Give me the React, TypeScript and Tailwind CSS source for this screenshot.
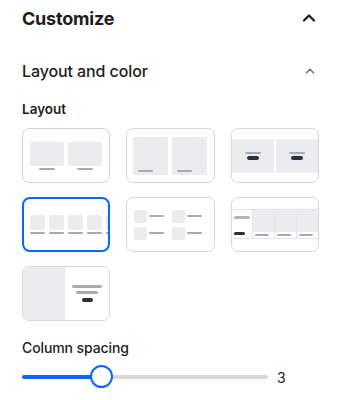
import { ChevronUp } from 'lucide-react';

const gray = 'bg-[#ececee]';

function CardShell({ children, selected, tint }: { children: React.ReactNode; selected?: boolean; tint?: boolean }) {
  return (
    <div
      className={`h-[55px] overflow-hidden bg-white ${
        selected
          ? 'border-2 border-[#0a66ff] rounded-[8px]'
          : tint
          ? 'border border-[#c9d4ea] rounded-[7px]'
          : 'border border-[#d6d8dc] rounded-[7px]'
      }`}
    >
      {children}
    </div>
  );
}

export default function App() {
  return (
    <div className="w-[341px] h-[400px] bg-white text-[#1c1c1e] overflow-hidden" style={{ fontFamily: 'Inter, "Liberation Sans", sans-serif' }}>
      {/* header */}
      <div className="h-[36px] flex items-center justify-between pl-[22px] pr-[22px]">
        <h1 className="text-[18px] font-bold tracking-[-0.2px]">Customize</h1>
        <ChevronUp className="w-[20px] h-[20px] text-[#1c1c1e]" strokeWidth={2.75} />
      </div>

      <div className="px-[22px]">
        <div className="mt-[21px] h-[28px] flex items-center justify-between">
          <h2 className="text-[16px] font-medium tracking-[-0.1px]">Layout and color</h2>
          <ChevronUp className="w-[14px] h-[14px] text-[#6b6f76] mr-[2px]" strokeWidth={2.5} />
        </div>

        <div className="mt-[14px] h-[20px] flex items-center text-[13.5px] font-semibold">Layout</div>

        <div className="mt-[9px] grid grid-cols-3 gap-x-[16px] gap-y-[14px]">
          {/* 1: two boxes with captions below */}
          <CardShell tint>
            <div className="h-full flex items-center justify-center gap-[4px]">
              {[0, 1].map((i) => (
                <div key={i} className="flex flex-col items-center">
                  <div className={`w-[34px] h-[24px] rounded-[2px] ${gray}`} />
                  <div className="w-[16px] h-[2px] mt-[2px] rounded-full bg-[#a8abb0]" />
                </div>
              ))}
            </div>
          </CardShell>

          {/* 2: two tall boxes with caption inside */}
          <CardShell>
            <div className="h-full flex items-center justify-center gap-[4px]">
              {[0, 1].map((i) => (
                <div key={i} className={`w-[35px] h-[38px] rounded-[2px] ${gray} flex items-end pl-[5px] pb-[3px]`}>
                  <div className="w-[15px] h-[2px] rounded-full bg-[#a8abb0]" />
                </div>
              ))}
            </div>
          </CardShell>

          {/* 3: banner band split in two */}
          <CardShell>
            <div className="h-full flex flex-col">
              <div className="h-[10px]" />
              <div className="h-[34px] flex gap-[2px]">
                {[0, 1].map((i) => (
                  <div key={i} className={`flex-1 ${gray} flex flex-col items-center justify-center`}>
                    <div className="w-[16px] h-[2px] rounded-full bg-[#a8abb0]" />
                    <div className="w-[12px] h-[4px] mt-[2px] rounded-full bg-[#2c3038]" />
                  </div>
                ))}
              </div>
            </div>
          </CardShell>

          {/* 4: carousel of squares (selected) */}
          <CardShell selected>
            <div className="h-full flex items-center pl-[6px] gap-[4px] overflow-hidden">
              {[0, 1, 2, 3, 4].map((i) => (
                <div key={i} className="flex flex-col shrink-0">
                  <div className={`w-[15px] h-[15px] rounded-[2px] ${gray}`} />
                  <div className="w-[15px] h-[2px] mt-[2px] rounded-full bg-[#a8abb0]" />
                </div>
              ))}
            </div>
          </CardShell>

          {/* 5: list with thumbnails */}
          <CardShell>
            <div className="h-full flex items-center pl-[7px]">
              <div className="grid grid-cols-2 gap-x-[8px] gap-y-[4px]">
                {[0, 1, 2, 3].map((i) => (
                  <div key={i} className="flex items-center gap-[2px]">
                    <div className={`w-[13px] h-[13px] rounded-[2px] ${gray}`} />
                    <div className="w-[15px] h-[2px] rounded-full bg-[#a8abb0]" />
                  </div>
                ))}
              </div>
            </div>
          </CardShell>

          {/* 6: table-like strip */}
          <CardShell>
            <div className="h-full flex flex-col">
              <div className="h-[11px] shrink-0" />
              <div className="h-[30px] shrink-0 flex border-y border-[#e1e3e6]">
                <div className="w-[20px] shrink-0 flex flex-col justify-between pl-[2px] pt-[6px] pb-[3px]">
                  <div className="w-[16px] h-[3px] rounded-full bg-[#b3b5ba]" />
                  <div className="w-[11px] h-[3px] rounded-full bg-[#2c3038]" />
                </div>
                {[0, 1, 2].map((i) => (
                  <div key={i} className="w-[22px] shrink-0 border-l border-[#e1e3e6] flex flex-col">
                    <div className={`h-[22px] ${gray}`} />
                    <div className="pl-[2px] pt-[2px]">
                      <div className="w-[14px] h-[2px] rounded-full bg-[#a8abb0]" />
                    </div>
                  </div>
                ))}
              </div>
            </div>
          </CardShell>

          {/* 7: image left, text right */}
          <CardShell>
            <div className="h-full flex">
              <div className={`w-[42px] ${gray}`} />
              <div className="flex-1 flex flex-col items-center justify-center">
                <div className="w-[30px] h-[3px] rounded-full bg-[#a8abb0]" />
                <div className="w-[22px] h-[3px] mt-[3px] rounded-full bg-[#a8abb0]" />
                <div className="w-[11px] h-[4px] mt-[4px] rounded-full bg-[#2c3038]" />
              </div>
            </div>
          </CardShell>
        </div>

        <div className="mt-[16px] h-[20px] flex items-center text-[14px] font-medium tracking-[-0.1px]">Column spacing</div>

        <div className="mt-[8px] h-[24px] flex items-center">
          <div className="relative w-[246px] h-[4px] rounded-full bg-[#d9d9d9]">
            <div className="absolute left-0 top-0 h-[4px] w-[79px] rounded-full bg-[#0a66ff]" />
            <div className="absolute left-[68px] top-[-10px] w-[23px] h-[23px] rounded-full bg-white border-[2.5px] border-[#0a66ff]" />
          </div>
          <span className="ml-[9px] text-[14px]">3</span>
        </div>
      </div>
    </div>
  );
}
